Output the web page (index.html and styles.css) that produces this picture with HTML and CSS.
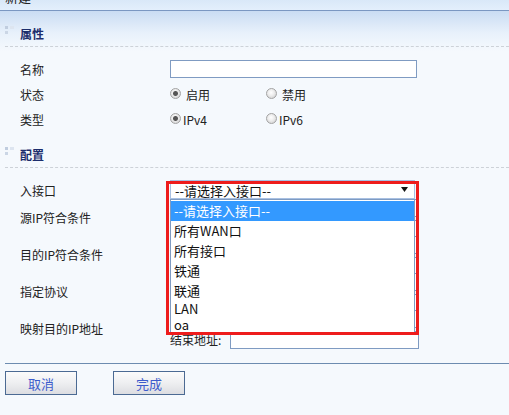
FILE: index.html
```html
<!DOCTYPE html>
<html lang="zh-CN">
<head>
<meta charset="utf-8">
<title>新建</title>
<link rel="stylesheet" href="styles.css">
</head>
<body>
<div class="topbar"><span class="title">新建</span></div>
<div class="panel">
  <div class="sec-head">
    <svg class="sec-icon" width="10" height="9" viewBox="0 0 10 9"><rect x="0" y="0" width="3" height="3" fill="#c0cddf"/><rect x="5" y="0" width="4" height="3" fill="#dde5f0"/><rect x="0" y="5" width="3" height="3" fill="#cbd6e5"/></svg>
    <span class="sec-title">属性</span>
  </div>
  <div class="form form-attr">
    <div class="row">
      <span class="lbl">名称</span>
      <div class="ctl"><span class="txt txt-name"></span></div>
    </div>
    <div class="row">
      <span class="lbl">状态</span>
      <div class="ctl">
        <span class="opt"><span class="radio checked"></span><span class="opt-text wide">启用</span></span>
        <span class="opt"><span class="radio"></span><span class="opt-text wide">禁用</span></span>
      </div>
    </div>
    <div class="row">
      <span class="lbl">类型</span>
      <div class="ctl">
        <span class="opt"><span class="radio checked"></span><span class="opt-text">IPv4</span></span>
        <span class="opt"><span class="radio"></span><span class="opt-text">IPv6</span></span>
      </div>
    </div>
  </div>

  <div class="sec-head">
    <svg class="sec-icon" width="10" height="9" viewBox="0 0 10 9"><rect x="0" y="0" width="3" height="3" fill="#c0cddf"/><rect x="5" y="0" width="4" height="3" fill="#dde5f0"/><rect x="0" y="5" width="3" height="3" fill="#cbd6e5"/></svg>
    <span class="sec-title">配置</span>
  </div>
  <div class="form form-cfg">
    <div class="row row-in">
      <span class="lbl lbl-in">入接口</span>
      <div class="select-wrap">
        <div class="select">
          <span class="select-text">--请选择入接口--</span>
          <svg class="arrow" width="7" height="5" viewBox="0 0 7 5"><path d="M0 0H7L3.5 5Z" fill="#111"/></svg>
        </div>
        <div class="dropdown">
          <div class="option cjk selected">--请选择入接口--</div>
          <div class="option cjk">所有WAN口</div>
          <div class="option cjk">所有接口</div>
          <div class="option cjk">铁通</div>
          <div class="option cjk">联通</div>
          <div class="option latin">LAN</div>
          <div class="option latin">oa</div>
        </div>
        <div class="annot"></div>
      </div>
    </div>
    <div class="row row-ip">
      <span class="lbl">源IP符合条件</span>
      <div class="ctl ip">
        <div class="ipline"><span class="iplbl">起始地址:</span><span class="txt txt-ip"></span></div>
        <div class="ipline"><span class="iplbl">结束地址:</span><span class="txt txt-ip"></span></div>
      </div>
    </div>
    <div class="row row-ip">
      <span class="lbl">目的IP符合条件</span>
      <div class="ctl ip">
        <div class="ipline"><span class="iplbl">起始地址:</span><span class="txt txt-ip"></span></div>
        <div class="ipline"><span class="iplbl">结束地址:</span><span class="txt txt-ip"></span></div>
      </div>
    </div>
    <div class="row row-ip">
      <span class="lbl">指定协议</span>
      <div class="ctl ip">
        <div class="ipline"><span class="iplbl">协议:</span><span class="txt txt-ip"></span></div>
        <div class="ipline"><span class="iplbl">端口:</span><span class="txt txt-ip"></span></div>
      </div>
    </div>
    <div class="row row-ip">
      <span class="lbl">映射目的IP地址</span>
      <div class="ctl ip">
        <div class="ipline"><span class="iplbl">起始地址:</span><span class="txt txt-ip"></span></div>
        <div class="ipline"><span class="iplbl">结束地址:</span><span class="txt txt-ip"></span></div>
      </div>
    </div>
  </div>

  <div class="footer">
    <button class="btn" type="button">取消</button>
    <button class="btn" type="button">完成</button>
  </div>
</div>
</body>
</html>
```

FILE: styles.css
```css
* { box-sizing: border-box; }

html, body {
  margin: 0;
  padding: 0;
  height: 100%;
}

body {
  background: #f5f9fd;
  font-family: "Noto Sans CJK SC", "Microsoft YaHei", sans-serif;
  font-size: 12px;
  color: #222;
  overflow: hidden;
}

.topbar {
  height: 11px;
  padding-left: 5px;
  background: linear-gradient(to bottom, #d9e8f8, #e3effc);
  border-bottom: 1px solid #7b97c2;
  overflow: hidden;
}

.title {
  display: block;
  margin-top: -10px;
  font-size: 13px;
  line-height: 13px;
  color: #222;
}

.panel {
  background: linear-gradient(to bottom, #cadcf3 0, #e8f1fb 22px, #f5f9fd 40px, #f5f9fd 100%);
  min-height: 404px;
  padding-top: 13px;
}

.sec-head {
  display: flex;
  align-items: flex-start;
  height: 23px;
  margin-left: 5px;
  padding-bottom: 2px;
  border-bottom: 1px dashed #cdd2d8;
}

.sec-head + .form { margin-top: 10px; }
.form + .sec-head { margin-top: 13px; }

.sec-icon {
  display: block;
  margin-top: 2px;
  margin-right: 5px;
  flex: none;
}

.sec-title {
  line-height: 20px;
  font-size: 12px;
  font-weight: bold;
  color: #1c2d6c;
}

.row {
  display: grid;
  grid-template-columns: 150px 1fr;
  align-items: center;
  padding-left: 20px;
  height: 25px;
}

.lbl {
  line-height: 20px;
  color: #222;
}

.ctl {
  display: flex;
  align-items: center;
}

.txt {
  display: block;
  height: 18px;
  background: #fff;
  border: 1px solid #7f9bc2;
}

.txt-name {
  width: 247px;
  margin-top: -1px;
}

.opt {
  display: flex;
  align-items: center;
  width: 96px;
}

.radio {
  display: block;
  flex: none;
  width: 11px;
  height: 11px;
  margin-bottom: 3px;
  border-radius: 50%;
  border: 1px solid #a3a3a3;
  background: radial-gradient(circle at 45% 40%, #ffffff 0, #eeeeee 40%, #c9c9c9 100%);
}

.radio.checked {
  background:
    radial-gradient(circle at 50% 50%, #555 0, #555 2px, rgba(85,85,85,0) 3px),
    radial-gradient(circle at 45% 40%, #ffffff 0, #eeeeee 40%, #c9c9c9 100%);
}

.opt-text {
  margin-left: 2px;
  line-height: 20px;
}

.opt-text.wide { margin-left: 5px; }

/* config section */
.row-in {
  height: 20px;
  align-items: start;
  position: relative;
  z-index: 2;
}

.lbl-in { margin-top: 3px; }

.select-wrap {
  position: relative;
  width: 245px;
  margin-top: 2px;
}

.select {
  display: flex;
  align-items: center;
  justify-content: space-between;
  height: 19px;
  padding: 2px 6px 0 4px;
  background: #fff;
  border: 1px solid #a8c0e2;
  font-size: 13px;
}

.select-text {
  line-height: 17px;
  color: #111;
}

.arrow {
  display: block;
  margin-bottom: 3px;
}

.dropdown {
  position: absolute;
  left: 0;
  top: 19px;
  width: 245px;
  padding-top: 1px;
  background: #fff;
  border: 1px solid #7f9bc2;
  font-size: 13px;
  color: #111;
}

.option {
  padding-left: 3px;
  white-space: nowrap;
}

.option.cjk { height: 20px; line-height: 20px; }
.option.latin { height: 16px; line-height: 16px; }

.option.selected {
  background: #3399ff;
  color: #fff;
}

.annot {
  position: absolute;
  left: -4px;
  top: 1px;
  width: 253px;
  height: 154px;
  border: 3px solid #ee1c1c;
  pointer-events: none;
}

.row-ip {
  height: 37px;
  position: relative;
  z-index: 1;
}

.ctl.ip {
  flex-direction: column;
  align-items: stretch;
  align-self: start;
  gap: 3px;
  margin-top: 1px;
}

.ipline {
  display: flex;
  align-items: center;
  height: 18px;
}

.iplbl {
  width: 60px;
  flex: none;
  line-height: 18px;
}

.txt-ip { width: 189px; }

.footer {
  display: flex;
  gap: 36px;
  margin: 17px 0 0 5px;
  padding-top: 7px;
  border-top: 1px solid #6d8cb0;
}

.btn {
  width: 72px;
  height: 24px;
  padding: 0;
  border: 1px solid #4b6a93;
  border-radius: 0;
  background: linear-gradient(to bottom, #fbfbfb 0, #eeeff1 50%, #dcdde1 100%);
  font-family: "Noto Sans CJK SC", "Microsoft YaHei", sans-serif;
  font-size: 13px;
  color: #3d5ccc;
}
```
